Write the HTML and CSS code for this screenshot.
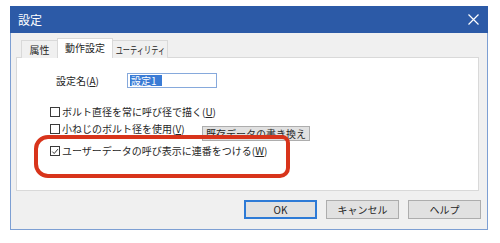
FILE: index.html
```html
<!DOCTYPE html>
<html lang="ja">
<head>
<meta charset="utf-8">
<link rel="stylesheet" href="styles.css">
</head>
<body>
<div class="dialog">
  <div class="titlebar">
    <span class="title">設定</span>
    <svg class="close" width="11" height="11" viewBox="0 0 11 11"><path d="M0.5 0.5 L10.5 10.5 M10.5 0.5 L0.5 10.5" stroke="#fff" stroke-width="1.2" fill="none"/></svg>
  </div>
  <div class="content">
    <div class="tabs">
      <div class="tab t1">属性</div>
      <div class="tab t2 active">動作設定</div>
      <div class="tab t3"><span class="t3text">ユーティリティ</span></div>
    </div>
    <div class="panel">
      <div class="row name-row">
        <span class="label">設定名(<u>A</u>)</span>
        <span class="input"><span class="sel">設定1</span></span>
      </div>
      <div class="row check-row r1">
        <span class="box"></span><span class="ctext">ボルト直径を常に呼び径で描く(<u>U</u>)</span>
      </div>
      <div class="row check-row r2">
        <span class="cwrap"><span class="box"></span><span class="ctext">小ねじのボルト径を使用(<u>V</u>)</span></span>
        <span class="btn small">既存データの書き換え</span>
      </div>
      <div class="row check-row r3">
        <span class="box checked"><svg width="9" height="9" viewBox="0 0 9 9"><path d="M1.5 4.6 L3.6 6.8 L7.8 1.8" stroke="#333" stroke-width="1.1" fill="none"/></svg></span><span class="ctext">ユーザーデータの呼び表示に連番をつける(<u>W</u>)</span>
      </div>
    </div>
  </div>
  <div class="footer">
    <span class="btn big ok">OK</span>
    <span class="btn big">キャンセル</span>
    <span class="btn big">ヘルプ</span>
  </div>
</div>
<div class="annotation"></div>
</body>
</html>
```
FILE: styles.css
```css
html, body {
  margin: 0;
  padding: 0;
  background: #ffffff;
}
body {
  width: 500px;
  height: 243px;
  position: relative;
  font-family: "Noto Sans CJK JP", "Noto Sans", sans-serif;
  color: #262626;
  font-size: 10px;
}
.dialog {
  margin: 6px 0 0 10px;
  width: 478px;
  height: 224px;
  box-sizing: border-box;
  border: 1px solid #7d9fd3;
  border-top: none;
  background: #f0f0f0;
  display: flex;
  flex-direction: column;
}
.titlebar {
  height: 27px;
  margin: 0 -1px;
  background: #2c5aa7;
  display: flex;
  align-items: center;
  justify-content: space-between;
  padding: 0 9px 0 8px;
  color: #ffffff;
}
.title {
  font-size: 12px;
  line-height: 14px;
}
.close {
  display: block;
}
.content {
  padding: 5px 8px 0 5px;
}
.tabs {
  display: flex;
  align-items: flex-end;
  height: 20px;
  padding-left: 5px;
  position: relative;
  z-index: 1;
  margin-bottom: -1px;
}
.tab {
  height: 18px;
  box-sizing: border-box;
  border: 1px solid #d9d9d9;
  border-bottom: none;
  background: #f0f0f0;
  display: flex;
  align-items: center;
  justify-content: center;
  font-size: 10px;
  line-height: 12px;
  white-space: nowrap;
}
.t1 { width: 36px; border-right: none; }
.t2 { width: 56px; }
.t3 { width: 55px; border-left: none; }
.t3text {
  display: inline-block;
  font-size: 10px;
  transform: scaleX(0.72);
  transform-origin: center;
}
.tab.active {
  height: 20px;
  background: #ffffff;
  padding-bottom: 1px;
}
.panel {
  height: 134px;
  box-sizing: border-box;
  background: #ffffff;
  border: 1px solid #d9d9d9;
  display: flex;
  flex-direction: column;
}
.row {
  display: flex;
  align-items: center;
}
.name-row {
  margin: 15px 0 0 39px;
  height: 15px;
}
.label {
  width: 71px;
  line-height: 12px;
}
.input {
  width: 90px;
  height: 15px;
  box-sizing: border-box;
  border: 1px solid #86a9dc;
  background: #fff;
  display: flex;
  align-items: center;
  padding-left: 2px;
}
.sel {
  background: #3a7bd5;
  color: #ffffff;
  line-height: 11px;
  padding: 0 1px;
  width: 30px;
}
.check-row {
  margin-left: 33px;
}
.r1 {
  margin-top: 17px;
  height: 14px;
}
.r2 {
  margin-top: 3px;
  align-items: flex-start;
  height: 19px;
}
.cwrap {
  display: flex;
  align-items: center;
  width: 152px;
  height: 14px;
}
.r3 {
  margin-top: 3px;
  height: 14px;
}
.box {
  width: 10px;
  height: 10px;
  box-sizing: border-box;
  border: 1px solid #3a3a3a;
  background: #fff;
  margin-right: 2px;
  display: flex;
  align-items: center;
  justify-content: center;
  flex: 0 0 auto;
}
.box svg { display: block; }
.ctext {
  line-height: 12px;
  white-space: nowrap;
}
.btn {
  box-sizing: border-box;
  background: #e1e1e1;
  border: 1px solid #adadad;
  display: flex;
  align-items: center;
  justify-content: center;
  white-space: nowrap;
}
.btn.small {
  margin-top: 4px;
  width: 108px;
  height: 15px;
  font-size: 10px;
  line-height: 12px;
}
.footer {
  display: flex;
  justify-content: flex-end;
  gap: 9px;
  padding: 9px 6px 0 0;
}
.btn.big {
  width: 73px;
  height: 19px;
  font-size: 10px;
  line-height: 12px;
}
.btn.ok {
  border: 1px solid #2d7ad6;
  box-shadow: inset 0 0 0 1px #2d7ad6;
}
.annotation {
  position: absolute;
  left: 34px;
  top: 135px;
  width: 256px;
  height: 43px;
  box-sizing: border-box;
  border: 4px solid #d8341b;
  border-radius: 14px 8px 10px 14px;
}
```
